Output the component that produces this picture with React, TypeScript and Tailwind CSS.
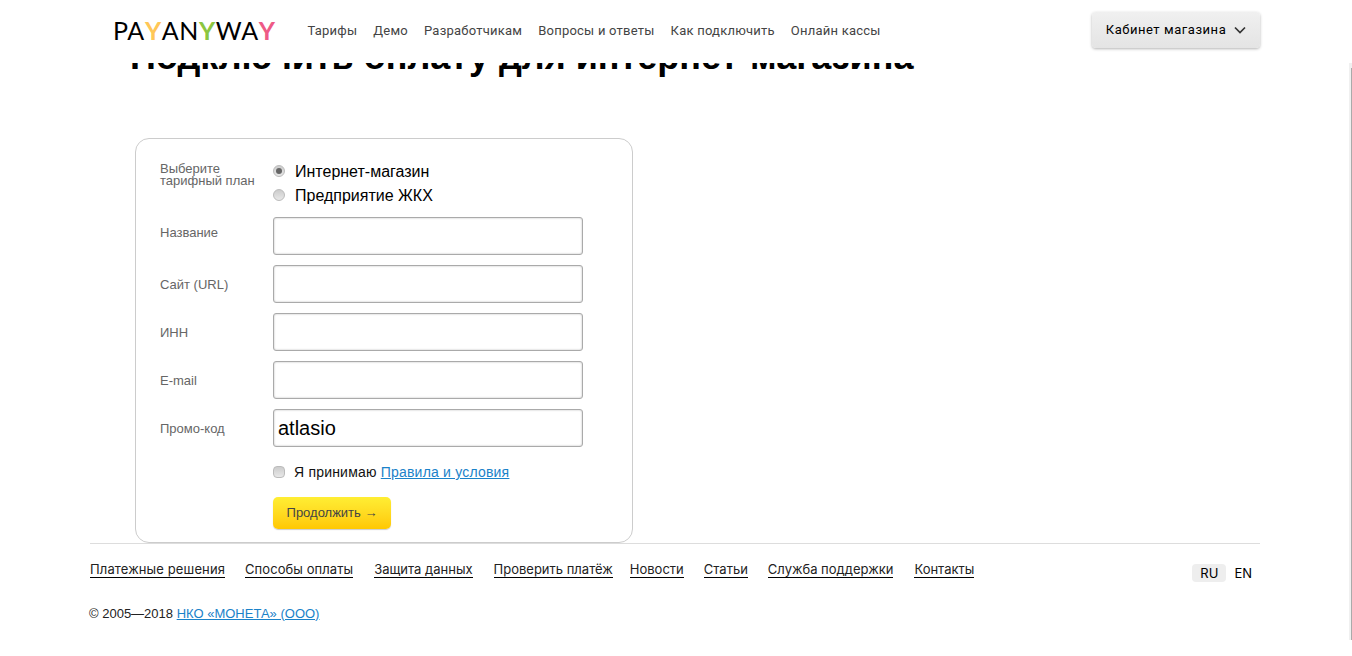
const navItems = ['Тарифы', 'Демо', 'Разработчикам', 'Вопросы и ответы', 'Как подключить', 'Онлайн кассы']
const footerItems = [
  { label: 'Платежные решения', className: 'tracking-[0.12px]' },
  { label: 'Способы оплаты', className: 'tracking-[0.07px]' },
  { label: 'Защита данных', className: 'ml-px' },
  { label: 'Проверить платёж', className: 'ml-px' },
  { label: 'Новости', className: '-ml-[3px]' },
  { label: 'Статьи', className: '' },
  { label: 'Служба поддержки', className: '' },
  { label: 'Контакты', className: 'ml-px' },
]
const fields = ['Название', 'Сайт (URL)', 'ИНН', 'E-mail']

function Logo() {
  return (
    <div className="flex items-center font-['Lato',sans-serif] text-[25px] leading-none tracking-[0.6px] text-black">
      <span>PA</span>
      <span className="font-bold text-[#ffc757]">Y</span>
      <span>AN</span>
      <span className="font-bold text-[#8cc63f]">Y</span>
      <span>WA</span>
      <span className="font-bold text-[#ee5a86]">Y</span>
    </div>
  )
}

function Radio({ checked, label }: { checked?: boolean; label: string }) {
  return (
    <label className="flex h-6 items-center">
      <span className="flex h-3 w-3 items-center justify-center rounded-full border border-[#bbb] bg-gradient-to-b from-[#ccc] to-[#e8e8e8]">
        {checked && <span className="h-1.5 w-1.5 rounded-full bg-[#666]" />}
      </span>
      <span className="ml-2.5 pt-0.5 text-base text-black">{label}</span>
    </label>
  )
}

function Field({ label, value, first }: { label: string; value?: string; first?: boolean }) {
  return (
    <div className="flex h-12">
      <label className={first ? 'w-[113px] pt-1.5 text-[13px] text-[#666]' : 'w-[113px] pt-2.5 text-[13px] text-[#666]'}>{label}</label>
      <input
        readOnly
        value={value ?? ''}
        className="h-[38px] w-[310px] rounded-[3px] border border-[#aaa] bg-white px-1 text-xl text-black shadow-[inset_0_0_2px_rgba(0,0,0,0.3)] outline-none"
      />
    </div>
  )
}

export default function App() {
  return (
    <div className="relative h-[656px] overflow-hidden bg-white font-['Liberation_Sans',Arial,sans-serif]">
      <header className="relative z-10 h-[63px] bg-white">
        <div className="mx-[90px] flex h-[60px] w-[1170px] items-center pl-[23px]">
          <Logo />
          <nav className="ml-8 flex gap-4 pt-px font-['Roboto',sans-serif] text-[13px] tracking-[0.23px] text-[#444]">
            {navItems.map((item) => (
              <a key={item}>{item}</a>
            ))}
          </nav>
          <button className="ml-auto flex h-9 w-[168px] items-center justify-center gap-2 rounded bg-gradient-to-b from-[#f0f0f0] to-[#e4e4e4] font-['Roboto',sans-serif] text-[13px] tracking-[0.55px] text-black shadow-[0_1px_3px_rgba(0,0,0,0.3)]">
            Кабинет магазина
            <svg width="12" height="8" viewBox="0 0 12 8" fill="none" stroke="#333" strokeWidth="1.7">
              <path d="M1 1.5l5 5 5-5" />
            </svg>
          </button>
        </div>
      </header>

      <main className="mx-[90px] w-[1170px]">
        <h1 className="-mt-[26px] pl-10 text-4xl font-bold leading-[40px] text-black">Подключить оплату для интернет-магазина</h1>

        <form className="ml-[45px] mt-[61px] h-[405px] w-[498px] rounded-[14px] border border-[#ccc] px-6 pt-5">
          <div className="flex h-[58px]">
            <div className="w-[113px] pt-1 text-[13px] leading-3 text-[#666]">
              Выберите
              <br />
              тарифный план
            </div>
            <div>
              <Radio checked label="Интернет-магазин" />
              <Radio label="Предприятие ЖКХ" />
            </div>
          </div>
          {fields.map((label, i) => (
            <Field key={label} label={label} first={i === 0} />
          ))}
          <Field label="Промо-код" value="atlasio" />
          <div className="ml-[113px] mt-[5px] flex h-5 items-center">
            <span className="h-3 w-3 rounded-sm border border-[#bbb] bg-gradient-to-b from-[#ccc] to-[#e8e8e8]" />
            <span className="ml-[9px] text-sm tracking-[0.2px] text-[#111]">
              Я принимаю <a className="text-[#1a82c9] underline">Правила и условия</a>
            </span>
          </div>
          <button className="ml-[113px] mt-[15px] h-8 w-[118px] rounded-[5px] bg-gradient-to-b from-[#ffee33] to-[#ffc800] text-[13px] text-[#444] shadow-[0_1px_1px_rgba(0,0,0,0.2)]">
            Продолжить →
          </button>
        </form>
      </main>

      <footer className="mx-[90px] w-[1170px] border-t border-[#ddd]">
        <div className="flex items-start justify-between pt-[17px]">
          <div className="flex gap-5 font-['Inter',sans-serif] text-[13px] leading-4 text-[#222]">
            {footerItems.map((item) => (
              <a key={item.label} className={`border-b border-black ${item.className}`}>
                {item.label}
              </a>
            ))}
          </div>
          <div className="mr-2 mt-[3px] flex items-center font-['Inter',sans-serif] text-[13px] leading-[18px] text-black">
            <span className="rounded-sm bg-[#eee] px-2">RU</span>
            <span className="ml-2">EN</span>
          </div>
        </div>
        <div className="-ml-px mt-[22px] text-[13px] text-[#222]">
          © 2005—2018 <a className="text-[#1a82c9] underline">НКО «МОНЕТА» (ООО)</a>
        </div>
      </footer>

      {/* page scrollbar */}
      <div className="absolute right-0 top-0 h-[640px] w-[3px] bg-[#f0f0f0]">
        <div className="ml-[2px] mt-[68px] h-[572px] w-px bg-[#aaa]" />
      </div>
    </div>
  )
}
